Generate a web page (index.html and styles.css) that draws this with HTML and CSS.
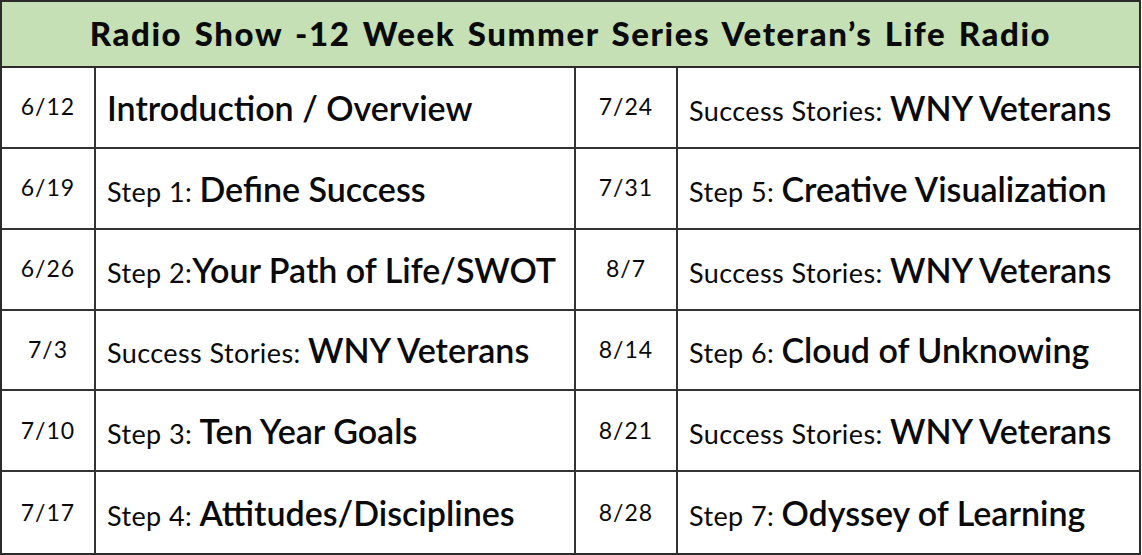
FILE: index.html
```html
<!DOCTYPE html>
<html>
<head>
<meta charset="utf-8">
<link rel="stylesheet" href="styles.css">
</head>
<body>
<div class="sheet">
  <div class="title">Radio Show -12 Week Summer Series Veteran’s Life Radio</div>
  <div class="grid">
    <div class="date">6/12</div>
    <div class="topic"><p><span class="big">Introduction / Overview</span></p></div>
    <div class="date">7/24</div>
    <div class="topic"><p><span class="small">Success Stories: </span><span class="big">WNY Veterans</span></p></div>

    <div class="date">6/19</div>
    <div class="topic"><p><span class="small">Step 1: </span><span class="big">Define Success</span></p></div>
    <div class="date">7/31</div>
    <div class="topic"><p><span class="small">Step 5: </span><span class="big">Creative Visualization</span></p></div>

    <div class="date">6/26</div>
    <div class="topic"><p><span class="small">Step 2:</span><span class="big">Your Path of Life/SWOT</span></p></div>
    <div class="date">8/7</div>
    <div class="topic"><p><span class="small">Success Stories: </span><span class="big">WNY Veterans</span></p></div>

    <div class="date">7/3</div>
    <div class="topic"><p><span class="small">Success Stories: </span><span class="big">WNY Veterans</span></p></div>
    <div class="date">8/14</div>
    <div class="topic"><p><span class="small">Step 6: </span><span class="big">Cloud of Unknowing</span></p></div>

    <div class="date">7/10</div>
    <div class="topic"><p><span class="small">Step 3: </span><span class="big">Ten Year Goals</span></p></div>
    <div class="date">8/21</div>
    <div class="topic"><p><span class="small">Success Stories: </span><span class="big">WNY Veterans</span></p></div>

    <div class="date">7/17</div>
    <div class="topic"><p><span class="small">Step 4: </span><span class="big">Attitudes/Disciplines</span></p></div>
    <div class="date">8/28</div>
    <div class="topic"><p><span class="small">Step 7: </span><span class="big">Odyssey of Learning</span></p></div>
  </div>
</div>
</body>
</html>
```
FILE: styles.css
```css
html, body {
  margin: 0;
  padding: 0;
  background: #ffffff;
}
body {
  font-family: "Lato", "DejaVu Sans", sans-serif;
  color: #0a0a0a;
  width: 1142px;
  height: 555px;
  overflow: hidden;
}
.sheet {
  width: 1141px;
  height: 555px;
  border: 2px solid #2b2b2b;
  box-sizing: border-box;
  display: flex;
  flex-direction: column;
}
.title {
  height: 66px;
  flex: none;
  background: #c5e0b4;
  border-bottom: 2px solid #2b2b2b;
  display: flex;
  align-items: center;
  justify-content: center;
  font-weight: 900;
  font-size: 33px;
  letter-spacing: 1.6px;
  word-spacing: 3px;
  padding-bottom: 2px;
  box-sizing: border-box;
}
.grid {
  flex: 1;
  display: grid;
  grid-template-columns: 94px 480px 102px 1fr;
  grid-template-rows: repeat(6, 1fr);
}
.grid > div {
  border-right: 2px solid #333;
  border-bottom: 2px solid #333;
  display: flex;
  align-items: center;
}
.grid > div:nth-child(4n) {
  border-right: none;
}
.grid > div:nth-last-child(-n+4) {
  border-bottom: none;
}
.date {
  justify-content: center;
  font-size: 23px;
  letter-spacing: 1px;
  padding-bottom: 2px;
}
.topic {
  padding-left: 11px;
  white-space: nowrap;
}
.topic p {
  margin: 0;
}
.small {
  font-size: 27px;
  letter-spacing: 0.4px;
}
.big {
  font-size: 34px;
  font-weight: 600;
  letter-spacing: 0;
}
```
